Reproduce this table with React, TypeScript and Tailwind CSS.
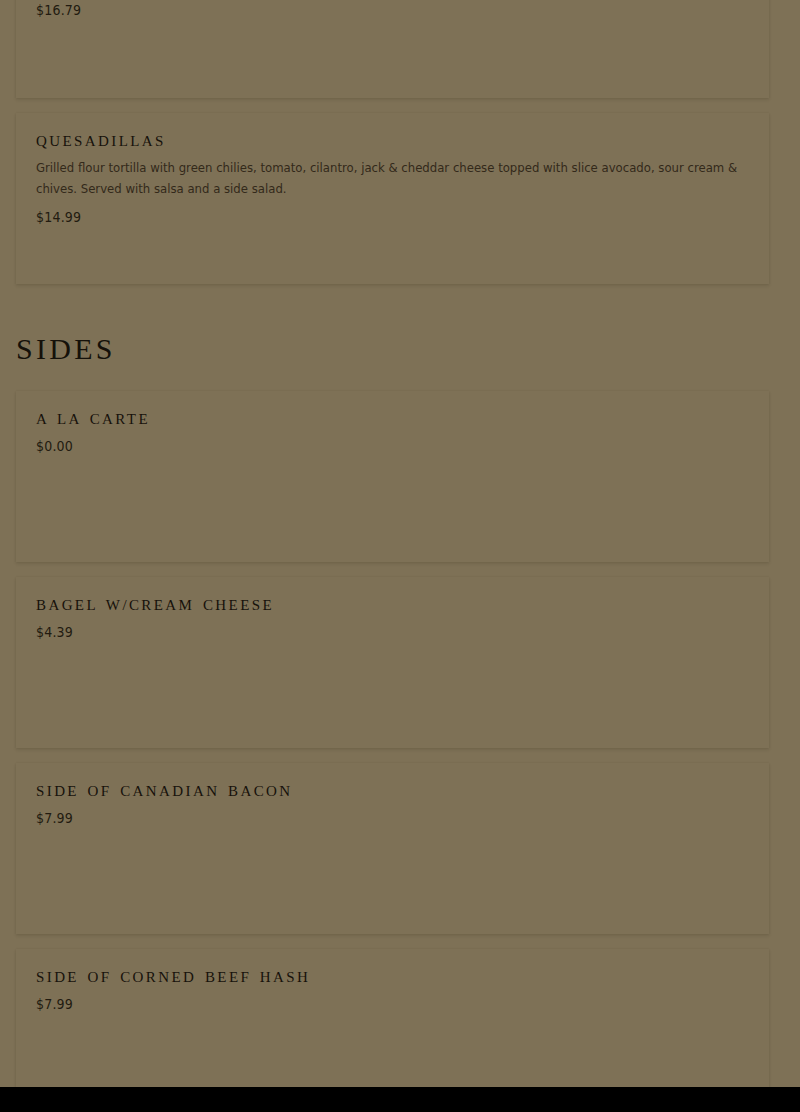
import React from "react";

type Item = { name?: string; desc?: string; price: string };

const cond = { fontFamily: '"DejaVu Sans Condensed", "DejaVu Sans", sans-serif', fontStretch: "condensed" as const };
const serif = { fontFamily: '"Liberation Serif", "DejaVu Serif", serif', wordSpacing: "2.5px" };

function Card({ item, first }: { item: Item; first?: boolean }) {
  return (
    <div
      className={
        "min-h-[171px] bg-[#7e7156] px-5 pb-5 shadow-[0_2px_3px_rgba(40,30,15,0.12),0_0_2px_rgba(40,30,15,0.08)] " +
        (first ? "pt-[72px]" : "pt-[17px]")
      }
    >
      {item.name && (
        <div className="text-[15px] leading-[22px] tracking-[2.4px] text-[#17120b] uppercase mb-[5px]" style={serif}>
          {item.name}
        </div>
      )}
      {item.desc && (
        <div className="text-[13px] leading-[21px] tracking-[0px] text-[#33291a] mb-[7px]" style={cond}>
          {item.desc}
        </div>
      )}
      <div className="text-[14px] leading-[22px] tracking-[0.2px] text-[#221b10]" style={cond}>
        {item.price}
      </div>
    </div>
  );
}

const top: Item[] = [
  {
    name: "Quesadillas",
    desc: "Grilled flour tortilla with green chilies, tomato, cilantro, jack & cheddar cheese topped with slice avocado, sour cream & chives. Served with salsa and a side salad.",
    price: "$14.99",
  },
];

const sides: Item[] = [
  { name: "A la carte", price: "$0.00" },
  { name: "Bagel w/cream cheese", price: "$4.39" },
  { name: "Side of Canadian Bacon", price: "$7.99" },
  { name: "Side of Corned Beef Hash", price: "$7.99" },
];

export default function App() {
  return (
    <div className="min-h-[1112px] h-[1112px] overflow-hidden bg-[#7e7156]">
      <div className="pl-4 pr-[31px] mt-[-73px] flex flex-col">
        <div className="flex flex-col gap-[15px]">
          <Card item={{ price: "$16.79" }} first />
          {top.map((it) => (
            <Card key={it.name} item={it} />
          ))}
        </div>
        <h2 className="mt-[47px] mb-[24px] text-[30px] leading-[36px] tracking-[3.3px] text-[#15110a] uppercase" style={serif}>
          Sides
        </h2>
        <div className="flex flex-col gap-[15px]">
          {sides.map((it) => (
            <Card key={it.name} item={it} />
          ))}
        </div>
      </div>
      <div className="fixed left-0 right-0 bottom-0 h-[25px] bg-black" />
    </div>
  );
}
